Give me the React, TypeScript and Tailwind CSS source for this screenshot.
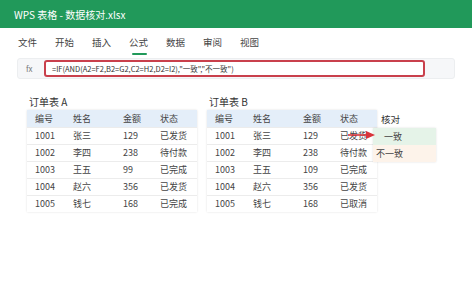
import React from "react";

const menus = ["文件", "开始", "插入", "公式", "数据", "审阅", "视图"];

const rowsA = [
  ["1001", "张三", "129", "已发货"],
  ["1002", "李四", "238", "待付款"],
  ["1003", "王五", "99", "已完成"],
  ["1004", "赵六", "356", "已发货"],
  ["1005", "钱七", "168", "已完成"],
];

const rowsB = [
  ["1001", "张三", "129", "已发货"],
  ["1002", "李四", "238", "待付款"],
  ["1003", "王五", "109", "已完成"],
  ["1004", "赵六", "356", "已发货"],
  ["1005", "钱七", "168", "已取消"],
];

const headers = ["编号", "姓名", "金额", "状态"];
const colW = ["w-[38px]", "w-[50px]", "w-[37px]", "w-[45px]"];

function OrderTable({ title, rows }: { title: string; rows: string[][] }) {
  return (
    <div className="flex flex-col">
      <div className="h-[15px] text-[10px] leading-[15px] text-[#333] pl-[2px]">{title}</div>
      <div className="mt-[1px] bg-white shadow-[0_0_2px_rgba(0,0,0,0.12)]">
        <div className="flex h-[17px] items-center bg-[#e4eef9] text-[9px] text-[#444]">
          {headers.map((h, i) => (
            <div key={h} className={`${colW[i]} pl-[8px]`}>{h}</div>
          ))}
        </div>
        {rows.map((r) => (
          <div key={r[0]} className="flex h-[17px] items-center border-t border-[#ececec] text-[9px] text-[#444]">
            {r.map((c, i) => (
              <div key={i} className={`${colW[i]} pl-[8px]`}>{c}</div>
            ))}
          </div>
        ))}
      </div>
    </div>
  );
}

export default function App() {
  return (
    <div className="w-[472px] h-[288px] bg-white overflow-hidden font-['Noto_Sans_CJK_SC','Noto_Sans',sans-serif]">
      <div className="h-[28px] bg-[#21995a] text-white text-[10px] flex items-center pl-[14px]">
        WPS 表格 - 数据核对.xlsx
      </div>

      <div className="h-[29px] flex items-center pl-[18px] gap-[18px] text-[9.5px] text-[#444]">
        {menus.map((m) => (
          <div key={m} className="relative">
            {m}
            {m === "公式" && (
              <div className="absolute left-[3px] -bottom-[5px] h-[2px] w-[15px] rounded bg-[#21995a]" />
            )}
          </div>
        ))}
      </div>

      <div className="mx-[17px] mt-[1px] h-[21px] rounded-[3px] border border-[#eceef0] bg-[#f6f7f9] flex items-center">
        <div className="w-[26px] pl-[8px] text-[8px] text-[#777]">fx</div>
        <div className="w-[381px] h-[17px] rounded-[3px] border-2 border-[#c9404c] bg-white flex items-center pl-[6px] text-[7.5px] text-[#333] whitespace-nowrap">
          =IF(AND(A2=F2,B2=G2,C2=H2,D2=I2),"一致","不一致")
        </div>
      </div>

      <div className="flex mt-[15px] pl-[27px]">
        <OrderTable title="订单表 A" rows={rowsA} />
        <div className="ml-[10px]">
          <OrderTable title="订单表 B" rows={rowsB} />
        </div>
        <div className="relative flex flex-col pt-[16px]">
          <div className="h-[18px] pl-[4px] text-[9.5px] leading-[18px] text-[#333]">核对</div>
          <div className="-ml-[4px] w-[63px] shadow-[0_0_2px_rgba(0,0,0,0.12)]">
            <div className="h-[17px] bg-[#e5f3e8] flex items-center pl-[11px] text-[9px] text-[#444]">一致</div>
            <div className="h-[17px] bg-[#fdf3ea] flex items-center pl-[3px] text-[9px] text-[#444]">不一致</div>
          </div>
          <svg className="absolute left-[-29px] top-[36px]" width="28" height="10" viewBox="0 0 28 10">
            <line x1="0" y1="5" x2="20" y2="5" stroke="#d8343b" strokeWidth="1.6" />
            <polygon points="18,1 27,5 18,9" fill="#d8343b" />
          </svg>
        </div>
      </div>
    </div>
  );
}
